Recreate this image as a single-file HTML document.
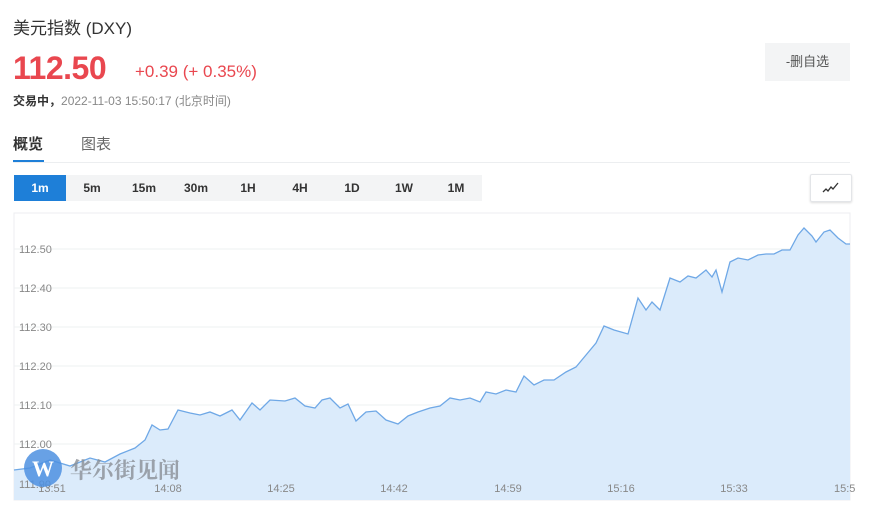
<!DOCTYPE html><html><head><meta charset="utf-8"><style>
body{margin:0;width:869px;height:519px;background:#fff;font-family:"Liberation Sans","Noto Sans CJK SC",sans-serif;position:relative;overflow:hidden}
.a{position:absolute;white-space:nowrap}
.tf span{display:inline-block;width:52px;text-align:center;font-size:12px;line-height:26px;color:#333;font-weight:bold}
</style></head><body>
<div class="a" style="left:13px;top:14px;font-size:17px;color:#333">美元指数 (DXY)</div>
<div class="a" style="left:13px;top:50px;font-size:32px;font-weight:bold;color:#e9474f;letter-spacing:-0.5px">112.50</div>
<div class="a" style="left:135px;top:62px;font-size:17px;color:#e9474f">+0.39 (+ 0.35%)</div>
<div class="a" style="left:13px;top:92px;font-size:12px;color:#888"><b style="color:#333">交易中，</b>2022-11-03 15:50:17 (北京时间)</div>
<div class="a" style="left:765px;top:43px;width:85px;height:38px;background:#f3f4f5;font-size:13px;color:#555;line-height:38px;text-align:center">-删自选</div>
<div class="a" style="left:13px;top:133px;font-size:15px;font-weight:bold;color:#333">概览</div>
<div class="a" style="left:81px;top:133px;font-size:15px;color:#666">图表</div>
<div class="a" style="left:13px;top:160px;width:31px;height:2px;background:#1e7fd8"></div>
<div class="a" style="left:13px;top:162px;width:837px;height:1px;background:#eceef0"></div>
<div class="a tf" style="left:14px;top:175px;width:468px;height:26px;background:#f3f4f5"><span style="background:#1e7fd8;color:#fff">1m</span><span>5m</span><span>15m</span><span>30m</span><span>1H</span><span>4H</span><span>1D</span><span>1W</span><span>1M</span></div>
<div class="a" style="left:810px;top:174px;width:40px;height:26px;border:1px solid #e3e5e8;border-radius:2px;box-shadow:0 1px 2px #ddd"><svg width="40" height="26"><path d="M12 17l3-3 2 2 3-4 2 2 5-6" fill="none" stroke="#333" stroke-width="1.3"/></svg></div>
<svg class="a" style="left:0;top:0" width="869" height="519">
<rect x="14" y="213" width="836" height="287" fill="none" stroke="#eceef0"/>
<g stroke="#eef0f2"><line x1="14" x2="850" y1="249" y2="249"/><line x1="14" x2="850" y1="288" y2="288"/><line x1="14" x2="850" y1="327" y2="327"/><line x1="14" x2="850" y1="366" y2="366"/><line x1="14" x2="850" y1="405" y2="405"/><line x1="14" x2="850" y1="444" y2="444"/><line x1="14" x2="850" y1="483" y2="483"/></g>
<polygon fill="#dbebfb" points="14,500 14,470 30,468 50,460 70,466 90,458 105,462 120,454 135,448 145,440 152,425 160,430 168,429 178,410 190,413 200,415 210,412 220,416 232,410 240,420 252,403 260,410 270,400 285,401 295,398 305,406 315,408 322,400 330,398 340,408 348,404 356,421 366,412 376,411 386,420 398,424 408,416 418,412 430,408 440,406 450,398 460,400 470,398 480,402 486,392 496,394 506,390 516,392 524,376 534,385 544,380 554,380 566,372 576,367 586,355 596,343 604,326 614,330 628,334 638,298 646,310 652,302 660,310 670,278 680,282 688,276 696,278 706,270 712,277 716,270 722,292 730,262 738,258 748,260 758,255 766,254 774,254 782,250 790,250 798,235 804,228 812,236 816,242 824,232 830,230 838,238 846,244 850,244 850,500"/>
<polyline fill="none" stroke="#6fa8e6" stroke-width="1.3" points="14,470 30,468 50,460 70,466 90,458 105,462 120,454 135,448 145,440 152,425 160,430 168,429 178,410 190,413 200,415 210,412 220,416 232,410 240,420 252,403 260,410 270,400 285,401 295,398 305,406 315,408 322,400 330,398 340,408 348,404 356,421 366,412 376,411 386,420 398,424 408,416 418,412 430,408 440,406 450,398 460,400 470,398 480,402 486,392 496,394 506,390 516,392 524,376 534,385 544,380 554,380 566,372 576,367 586,355 596,343 604,326 614,330 628,334 638,298 646,310 652,302 660,310 670,278 680,282 688,276 696,278 706,270 712,277 716,270 722,292 730,262 738,258 748,260 758,255 766,254 774,254 782,250 790,250 798,235 804,228 812,236 816,242 824,232 830,230 838,238 846,244 850,244"/>
<g font-size="11" fill="#888" font-family="Liberation Sans,sans-serif"><text x="19" y="253">112.50</text><text x="19" y="292">112.40</text><text x="19" y="331">112.30</text><text x="19" y="370">112.20</text><text x="19" y="409">112.10</text><text x="19" y="448">112.00</text><text x="19" y="488">111.90</text>
<text x="52" y="492" text-anchor="middle">13:51</text><text x="168" y="492" text-anchor="middle">14:08</text><text x="281" y="492" text-anchor="middle">14:25</text><text x="394" y="492" text-anchor="middle">14:42</text><text x="508" y="492" text-anchor="middle">14:59</text><text x="621" y="492" text-anchor="middle">15:16</text><text x="734" y="492" text-anchor="middle">15:33</text><text x="834" y="492">15:5</text></g>
<circle cx="43" cy="468" r="19" fill="#4d90e0" fill-opacity="0.85"/>
<text x="43" y="476" text-anchor="middle" font-size="22" font-weight="bold" fill="#fff" font-family="Liberation Serif,serif">W</text>
<text x="70" y="478" font-size="22" fill="#8a8f96" fill-opacity="0.8" font-family="Noto Serif CJK SC,serif" font-weight="bold">华尔街见闻</text>
</svg>
</body></html>
